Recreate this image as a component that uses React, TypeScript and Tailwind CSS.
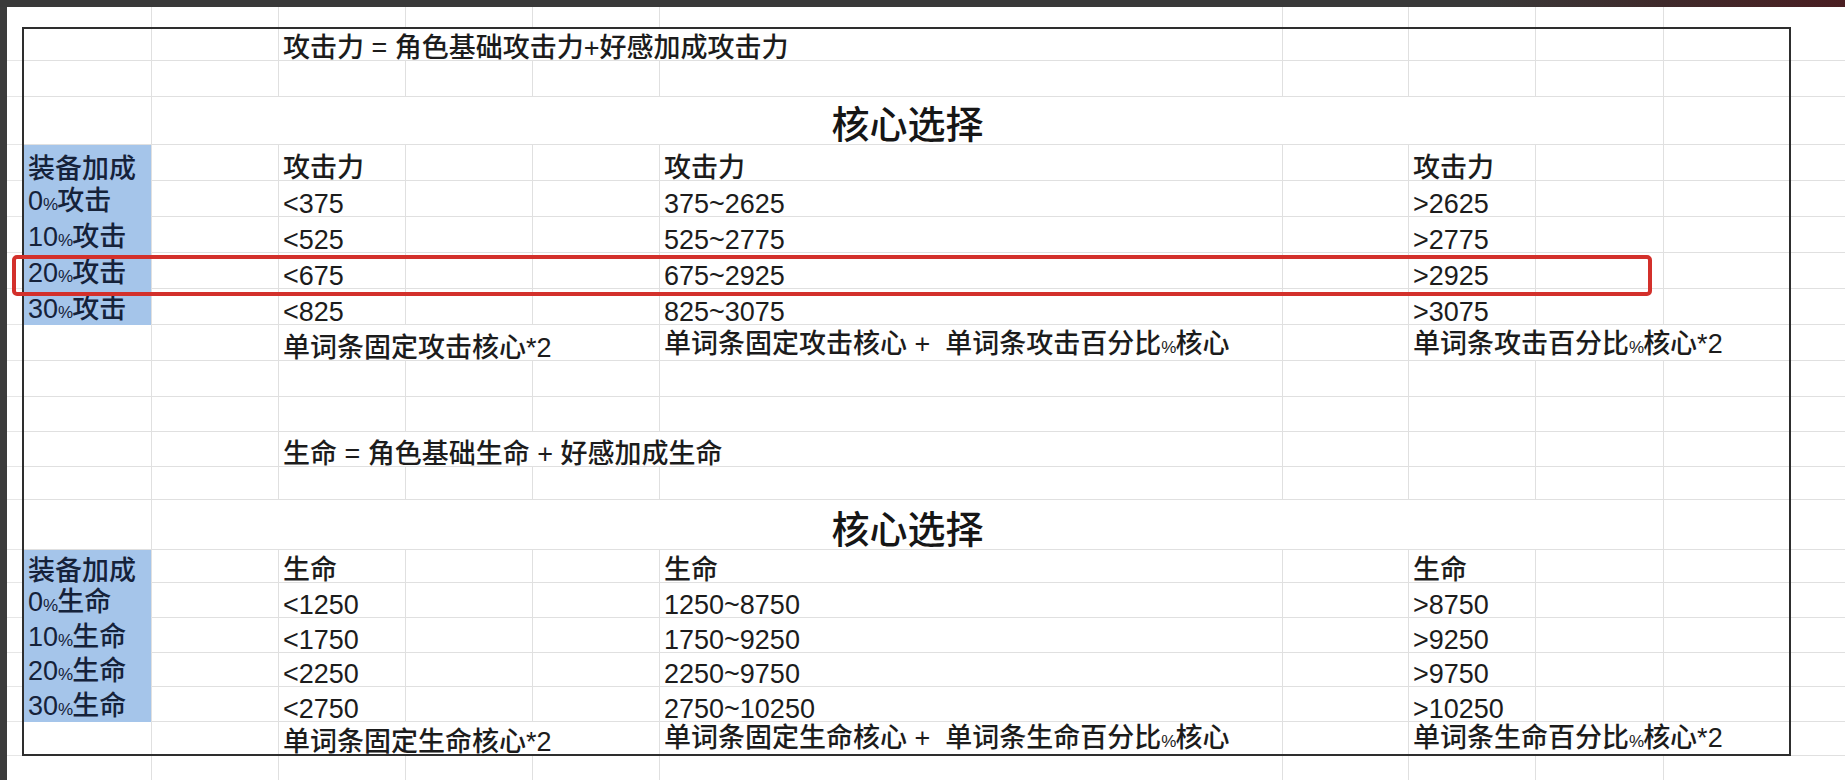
import React from "react";

// column widths inside the framed box (A..J); F is the wide merged column
const COLS = [128, 127, 127, 127, 127, 623, 126, 127, 128, 125];
// same columns as seen from outside the frame (top / bottom strip)
const OUTER_COLS = [130, 127, 127, 127, 127, 623, 126, 127, 128];

const ROW_H = [32, 36, 48, 36, 36, 36, 36, 36, 36, 36, 35, 35, 33, 50, 33, 35, 35, 34, 35, 32];
const SIDE_H = [34, 36, 48, 36, 36, 36, 36, 36, 36, 36, 35, 35, 33, 50, 33, 35, 35, 34, 35, 34];

type Cell = {
  span?: number;
  text?: React.ReactNode;
  blue?: boolean;
  title?: boolean;
};

const Pct = () => <span className="text-[17px] tracking-[-1px]">%</span>;

const empty = (): Cell[] => Array.from({ length: 10 }, () => ({}));

const formula = (text: string): Cell[] => [{}, {}, { span: 4, text }, {}, {}, {}, {}];

const title = (text: string): Cell[] => [{}, { span: 8, text, title: true }, {}];

const dataRow = (label: React.ReactNode, a: string, b: string, c: string): Cell[] => [
  { blue: true, text: label },
  {},
  { text: a },
  {},
  {},
  { text: b },
  {},
  { text: c },
  {},
  {},
];

const footer = (a: string, b: React.ReactNode, c: React.ReactNode): Cell[] => [
  {},
  {},
  { span: 3, text: a },
  { text: b },
  {},
  { span: 3, text: c },
];

const lbl = (n: string, s: string) => (
  <>
    {n}
    <Pct />
    {s}
  </>
);

const ROWS: Cell[][] = [
  formula("攻击力 = 角色基础攻击力+好感加成攻击力"),
  empty(),
  title("核心选择"),
  dataRow("装备加成", "攻击力", "攻击力", "攻击力"),
  dataRow(lbl("0", "攻击"), "<375", "375~2625", ">2625"),
  dataRow(lbl("10", "攻击"), "<525", "525~2775", ">2775"),
  dataRow(lbl("20", "攻击"), "<675", "675~2925", ">2925"),
  dataRow(lbl("30", "攻击"), "<825", "825~3075", ">3075"),
  footer(
    "单词条固定攻击核心*2",
    <>
      单词条固定攻击核心 +  单词条攻击百分比<Pct />核心
    </>,
    <>
      单词条攻击百分比<Pct />核心*2
    </>,
  ),
  empty(),
  empty(),
  formula("生命 = 角色基础生命 + 好感加成生命"),
  empty(),
  title("核心选择"),
  dataRow("装备加成", "生命", "生命", "生命"),
  dataRow(lbl("0", "生命"), "<1250", "1250~8750", ">8750"),
  dataRow(lbl("10", "生命"), "<1750", "1750~9250", ">9250"),
  dataRow(lbl("20", "生命"), "<2250", "2250~9750", ">9750"),
  dataRow(lbl("30", "生命"), "<2750", "2750~10250", ">10250"),
  footer(
    "单词条固定生命核心*2",
    <>
      单词条固定生命核心 +  单词条生命百分比<Pct />核心
    </>,
    <>
      单词条生命百分比<Pct />核心*2
    </>,
  ),
];

function SheetRow({ cells, h, last }: { cells: Cell[]; h: number; last: boolean }) {
  let col = 0;
  return (
    <div className="flex" style={{ height: h }}>
      {cells.map((c, i) => {
        const span = c.span ?? 1;
        const width = COLS.slice(col, col + span).reduce((a, b) => a + b, 0);
        const isLastCol = col + span >= COLS.length;
        col += span;
        return (
          <div
            key={i}
            style={{ width }}
            className={
              "flex shrink-0 whitespace-pre items-end " +
              (c.title ? "justify-center " : "pl-[4px] ") +
              (isLastCol ? "" : "border-r border-[#e0e0e0] ") +
              (c.blue
                ? "bg-[#a5c5ea] text-[#15223a] "
                : last
                  ? ""
                  : "border-b border-[#e0e0e0] ")
            }
          >
            {c.title ? (
              <span className="text-[38px] leading-[38px] font-medium text-[#161616]">{c.text}</span>
            ) : (
              <span className="text-[27px] leading-[24px] font-medium">{c.text}</span>
            )}
          </div>
        );
      })}
    </div>
  );
}

function OuterStrip({ h }: { h: number }) {
  return (
    <div className="flex" style={{ height: h }}>
      <div className="w-[15px] shrink-0" />
      {OUTER_COLS.map((w, i) => (
        <div key={i} style={{ width: w }} className="shrink-0 border-r border-[#e0e0e0]" />
      ))}
      <div className="flex-1" />
    </div>
  );
}

export default function App() {
  return (
    <div className="relative w-[1845px] h-[780px] overflow-hidden bg-white flex flex-col font-['Liberation_Sans','Noto_Sans_CJK_SC',sans-serif] text-[#1c1c1c]">
      {/* dark band of the screen above the sheet */}
      <div className="h-[7px] shrink-0 flex bg-[#393939]">
        <div className="flex-1" />
        <div className="w-[360px] bg-gradient-to-r from-[#393939] via-[#3f2a2b] to-[#4a1e22]" />
      </div>

      <div className="flex flex-1">
        <div className="w-[7px] shrink-0 bg-[#3b3b3b]" />

        <div className="flex-1 flex flex-col">
          <OuterStrip h={20} />

          <div className="flex">
            {/* left margin gridlines */}
            <div className="w-[15px] shrink-0 flex flex-col">
              {SIDE_H.map((h, i) => (
                <div key={i} style={{ height: h }} className="border-b border-[#e6e6e6]" />
              ))}
            </div>

            {/* framed table */}
            <div className="shrink-0 border-2 border-[#2e2e2e] flex flex-col">
              {ROWS.map((cells, i) => (
                <SheetRow key={i} cells={cells} h={ROW_H[i]} last={i === ROWS.length - 1} />
              ))}
            </div>

            {/* right margin gridlines */}
            <div className="flex-1 flex flex-col">
              {SIDE_H.map((h, i) => (
                <div key={i} style={{ height: h }} className="border-b border-[#e0e0e0]" />
              ))}
            </div>
          </div>

          <OuterStrip h={30} />
        </div>
      </div>

      {/* red highlight around the 20% row */}
      <div className="absolute left-[12px] top-[255px] w-[1640px] h-[41px] border-[4px] border-[#d3302b] rounded-[5px]" />
    </div>
  );
}
